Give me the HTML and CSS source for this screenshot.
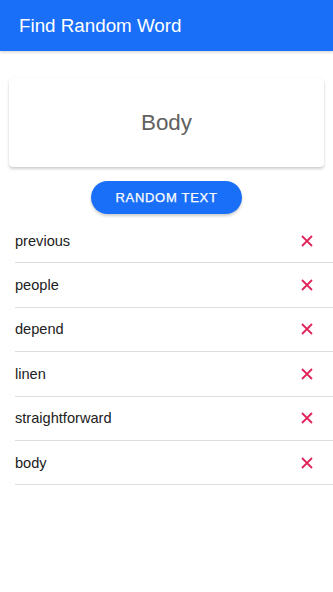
FILE: index.html
```html
<!DOCTYPE html>
<html lang="en">
<head>
    <meta charset="UTF-8">
    <meta name="viewport" content="width=device-width, initial-scale=1.0">
    <title>Find Random Word</title>
    <link rel="stylesheet" href="styles.css">
</head>
<body>
    <header class="app-bar">
        <h1>Find Random Word</h1>
    </header>
    <main class="content">
        <div class="word-card">
            <span class="word">Body</span>
        </div>
        <button class="random-btn">RANDOM TEXT</button>
        <ul class="word-list">
            <li class="word-row"><span>previous</span><button class="remove" aria-label="remove"><svg viewBox="0 0 12 12"><path d="M1 1 L11 11 M11 1 L1 11"/></svg></button></li>
            <li class="word-row"><span>people</span><button class="remove" aria-label="remove"><svg viewBox="0 0 12 12"><path d="M1 1 L11 11 M11 1 L1 11"/></svg></button></li>
            <li class="word-row"><span>depend</span><button class="remove" aria-label="remove"><svg viewBox="0 0 12 12"><path d="M1 1 L11 11 M11 1 L1 11"/></svg></button></li>
            <li class="word-row"><span>linen</span><button class="remove" aria-label="remove"><svg viewBox="0 0 12 12"><path d="M1 1 L11 11 M11 1 L1 11"/></svg></button></li>
            <li class="word-row"><span>straightforward</span><button class="remove" aria-label="remove"><svg viewBox="0 0 12 12"><path d="M1 1 L11 11 M11 1 L1 11"/></svg></button></li>
            <li class="word-row"><span>body</span><button class="remove" aria-label="remove"><svg viewBox="0 0 12 12"><path d="M1 1 L11 11 M11 1 L1 11"/></svg></button></li>
        </ul>
    </main>
</body>
</html>
```

FILE: styles.css
```css
body {
    margin: 0;
    font-family: 'Liberation Sans', Arial, sans-serif;
    background-color: #ffffff;
    color: #212121;
}
.app-bar {
    height: 51px;
    background-color: #1a6ff9;
    display: flex;
    align-items: center;
    padding: 0 19px;
    box-shadow: 0 1px 3px rgba(0, 0, 0, 0.2);
}
.app-bar h1 {
    margin: 0;
    font-size: 18.8px;
    font-weight: 400;
    color: #ffffff;
}
.content {
    display: flex;
    flex-direction: column;
    align-items: center;
    padding-top: 27px;
}
.word-card {
    width: 315px;
    height: 89px;
    border-radius: 4px;
    background-color: #ffffff;
    box-shadow: 0 2px 3px rgba(0, 0, 0, 0.18), 0 0 2px rgba(0, 0, 0, 0.06);
    display: flex;
    justify-content: center;
    align-items: center;
}
.word {
    font-size: 22.4px;
    color: #616161;
}
.random-btn {
    margin-top: 14px;
    width: 151px;
    height: 33px;
    border: none;
    border-radius: 17px;
    background-color: #1a6ff9;
    color: #ffffff;
    font-family: 'Liberation Sans', Arial, sans-serif;
    font-size: 13px;
    letter-spacing: 0.7px;
    -webkit-text-stroke: 0.25px #ffffff;
    box-shadow: 0 2px 3px rgba(0, 0, 0, 0.2);
}
.word-list {
    list-style: none;
    margin: 5px 0 0 15px;
    padding: 0;
    align-self: stretch;
}
.word-row {
    height: 43.4px;
    border-bottom: 1px solid #dddddd;
    display: flex;
    justify-content: space-between;
    align-items: center;
    font-size: 14.6px;
}
.remove {
    border: none;
    background: transparent;
    padding: 0;
    width: 12px;
    height: 12px;
    margin-right: 20px;
    display: flex;
}
.remove svg {
    width: 12px;
    height: 12px;
    stroke: #e0245a;
    stroke-width: 1.8;
    fill: none;
}
```
